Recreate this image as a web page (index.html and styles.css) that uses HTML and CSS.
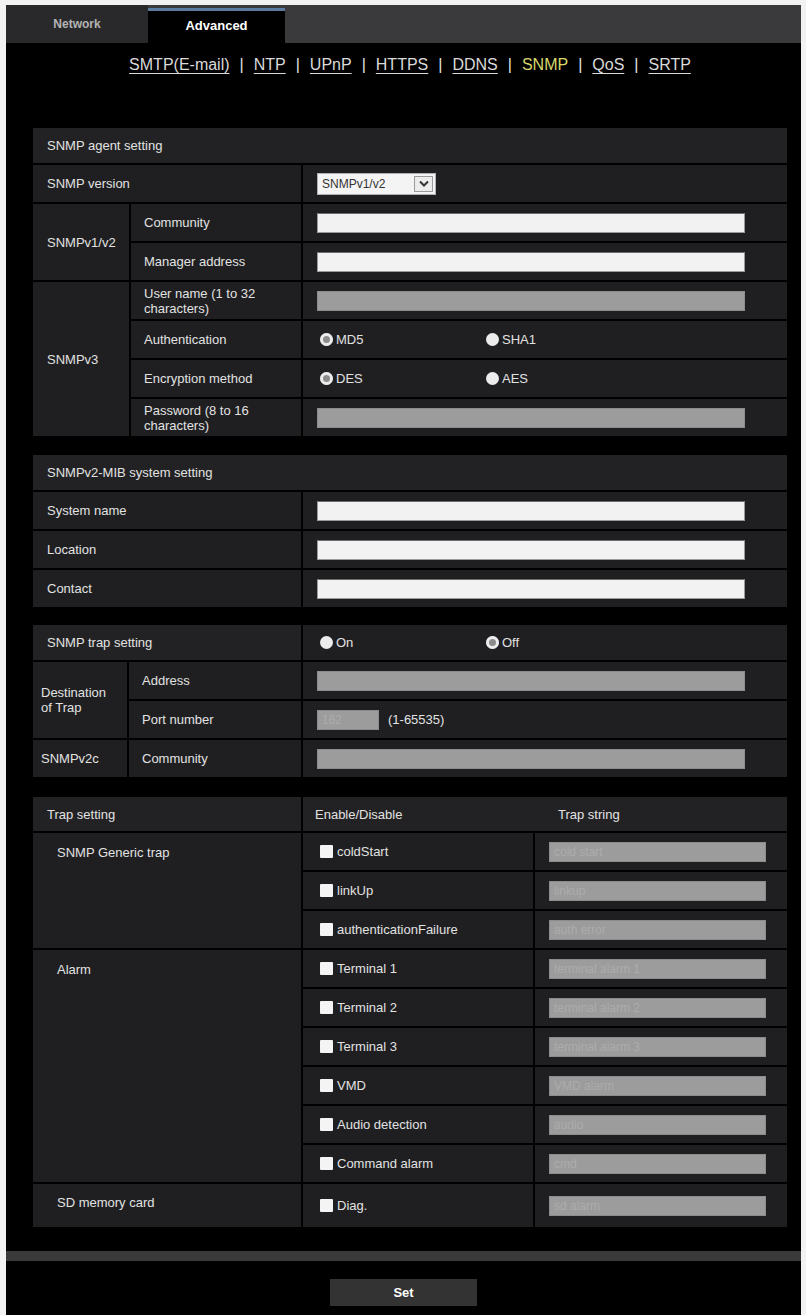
FILE: index.html
```html
<!DOCTYPE html>
<html lang="en">
<head>
    <meta charset="UTF-8">
    <meta name="viewport" content="width=device-width, initial-scale=1.0">
    <title>SNMP - Advanced</title>
    <link rel="stylesheet" href="styles.css">
</head>
<body>
<div class="page">
    <div class="tabs">
        <a class="tab" href="#">Network</a>
        <a class="tab tab-active" href="#">Advanced</a>
    </div>

    <div class="content">
        <nav class="subnav">
            <a href="#">SMTP(E-mail)</a><span class="sep">|</span>
            <a href="#">NTP</a><span class="sep">|</span>
            <a href="#">UPnP</a><span class="sep">|</span>
            <a href="#">HTTPS</a><span class="sep">|</span>
            <a href="#">DDNS</a><span class="sep">|</span>
            <span class="current">SNMP</span><span class="sep">|</span>
            <a href="#">QoS</a><span class="sep">|</span>
            <a href="#">SRTP</a>
        </nav>

        <!-- SNMP agent setting -->
        <section class="panel panel-agent">
            <div class="cell cell-head span-all">SNMP agent setting</div>

            <div class="cell span-2">SNMP version</div>
            <div class="cell cell-value">
                <div class="select">
                    <select>
                        <option>SNMPv1/v2</option>
                        <option>SNMPv3</option>
                    </select>
                    <span class="select-arrow">
                        <svg width="10" height="7" viewBox="0 0 10 7"><path d="M1 1.5 L5 5.5 L9 1.5" fill="none" stroke="#333" stroke-width="2"/></svg>
                    </span>
                </div>
            </div>

            <div class="cell rows-2">SNMPv1/v2</div>
            <div class="cell cell-sub">Community</div>
            <div class="cell cell-value"><input class="field" type="text"></div>
            <div class="cell cell-sub">Manager address</div>
            <div class="cell cell-value"><input class="field" type="text"></div>

            <div class="cell rows-4">SNMPv3</div>
            <div class="cell cell-sub">User name (1 to 32 characters)</div>
            <div class="cell cell-value"><input class="field" type="text" disabled></div>
            <div class="cell cell-sub">Authentication</div>
            <div class="cell cell-value">
                <label class="option"><input type="radio" name="auth" checked>MD5</label>
                <label class="option"><input type="radio" name="auth">SHA1</label>
            </div>
            <div class="cell cell-sub">Encryption method</div>
            <div class="cell cell-value">
                <label class="option"><input type="radio" name="enc" checked>DES</label>
                <label class="option"><input type="radio" name="enc">AES</label>
            </div>
            <div class="cell cell-sub">Password (8 to 16 characters)</div>
            <div class="cell cell-value"><input class="field" type="password" disabled></div>
        </section>

        <!-- SNMPv2-MIB system setting -->
        <section class="panel panel-mib">
            <div class="cell cell-head span-all">SNMPv2-MIB system setting</div>
            <div class="cell">System name</div>
            <div class="cell cell-value"><input class="field" type="text"></div>
            <div class="cell">Location</div>
            <div class="cell cell-value"><input class="field" type="text"></div>
            <div class="cell">Contact</div>
            <div class="cell cell-value"><input class="field" type="text"></div>
        </section>

        <!-- SNMP trap setting -->
        <section class="panel panel-trap">
            <div class="cell cell-head span-2">SNMP trap setting</div>
            <div class="cell cell-value">
                <label class="option"><input type="radio" name="trap">On</label>
                <label class="option"><input type="radio" name="trap" checked>Off</label>
            </div>

            <div class="cell cell-narrow rows-2">Destination of Trap</div>
            <div class="cell cell-sub">Address</div>
            <div class="cell cell-value"><input class="field" type="text" disabled></div>
            <div class="cell cell-sub">Port number</div>
            <div class="cell cell-value">
                <input class="field field-port" type="text" value="162" disabled>
                <span class="range">(1-65535)</span>
            </div>

            <div class="cell cell-narrow">SNMPv2c</div>
            <div class="cell cell-sub">Community</div>
            <div class="cell cell-value"><input class="field" type="text" disabled></div>
        </section>

        <!-- Trap setting -->
        <section class="panel panel-list">
            <div class="cell cell-head">Trap setting</div>
            <div class="cell cell-head span-2 head-split">
                <span class="head-enable">Enable/Disable</span>
                <span>Trap string</span>
            </div>

            <div class="cell cell-group rows-3">SNMP Generic trap</div>
            <div class="cell cell-check"><label class="check"><input type="checkbox">coldStart</label></div>
            <div class="cell cell-string"><input class="field field-string" type="text" value="cold start" disabled></div>
            <div class="cell cell-check"><label class="check"><input type="checkbox">linkUp</label></div>
            <div class="cell cell-string"><input class="field field-string" type="text" value="linkup" disabled></div>
            <div class="cell cell-check"><label class="check"><input type="checkbox">authenticationFailure</label></div>
            <div class="cell cell-string"><input class="field field-string" type="text" value="auth error" disabled></div>

            <div class="cell cell-group rows-6">Alarm</div>
            <div class="cell cell-check"><label class="check"><input type="checkbox">Terminal 1</label></div>
            <div class="cell cell-string"><input class="field field-string" type="text" value="terminal alarm 1" disabled></div>
            <div class="cell cell-check"><label class="check"><input type="checkbox">Terminal 2</label></div>
            <div class="cell cell-string"><input class="field field-string" type="text" value="terminal alarm 2" disabled></div>
            <div class="cell cell-check"><label class="check"><input type="checkbox">Terminal 3</label></div>
            <div class="cell cell-string"><input class="field field-string" type="text" value="terminal alarm 3" disabled></div>
            <div class="cell cell-check"><label class="check"><input type="checkbox">VMD</label></div>
            <div class="cell cell-string"><input class="field field-string" type="text" value="VMD alarm" disabled></div>
            <div class="cell cell-check"><label class="check"><input type="checkbox">Audio detection</label></div>
            <div class="cell cell-string"><input class="field field-string" type="text" value="audio" disabled></div>
            <div class="cell cell-check"><label class="check"><input type="checkbox">Command alarm</label></div>
            <div class="cell cell-string"><input class="field field-string" type="text" value="cmd" disabled></div>

            <div class="cell cell-group row-last">SD memory card</div>
            <div class="cell cell-check row-last"><label class="check"><input type="checkbox">Diag.</label></div>
            <div class="cell cell-string row-last"><input class="field field-string" type="text" value="sd alarm" disabled></div>
        </section>
    </div>

    <div class="footer-bar"></div>
    <div class="actions">
        <button class="btn-set" type="button">Set</button>
    </div>
</div>
</body>
</html>
```

FILE: styles.css
```css
* {
    margin: 0;
    padding: 0;
    box-sizing: border-box;
    font-family: 'Liberation Sans', Arial, sans-serif;
}

body {
    background: #f2f2f2;
}

.page {
    margin: 5px 5px 0 6px;
    min-height: 1310px;
    background: #000;
    color: #e2e2e2;
    font-size: 13px;
}

/* top tabs */
.tabs {
    display: flex;
    align-items: flex-end;
    height: 38px;
    background: #3a3a3c;
}

.tab {
    display: flex;
    align-items: center;
    justify-content: center;
    width: 142px;
    height: 38px;
    background: #29292b;
    color: #b4b4b4;
    font-size: 12px;
    font-weight: bold;
    text-decoration: none;
}

.tab-active {
    width: 137px;
    height: 35px;
    padding-bottom: 3px;
    background: #000;
    color: #fff;
    font-size: 13px;
    border-top: 3px solid #5a7aa0;
}

.content {
    padding: 12px 14px 0 27px;
}

/* sub menu */
.subnav {
    display: flex;
    justify-content: center;
    height: 20px;
    line-height: 20px;
    margin-bottom: 53px;
    font-size: 16px;
}

.subnav a {
    color: #dadada;
    text-decoration: underline;
    text-underline-offset: 3px;
}

.subnav .current {
    color: #d8d86a;
}

.subnav .sep {
    padding: 0 10px;
    color: #e0e0e0;
}

/* setting panels */
.panel {
    display: grid;
    grid-template-columns: 96px 170px 1fr;
    grid-auto-rows: 37px;
    gap: 2px;
    margin-bottom: 19px;
}

.panel-agent {
    grid-template-rows: 35px;
}

.panel-mib {
    grid-template-columns: 268px 1fr;
    grid-template-rows: 35px;
    margin-bottom: 18px;
}

.panel-trap {
    grid-template-columns: 94px 172px 1fr;
    grid-template-rows: 35px;
    margin-bottom: 20px;
}

.panel-list {
    grid-template-columns: 268px 230px 1fr;
    grid-template-rows: 34px;
    margin-bottom: 0;
}

.cell {
    display: flex;
    align-items: center;
    padding: 0 14px;
    background: #1f1f21;
    line-height: 15px;
}

.cell-head {
    background: #222224;
}

.span-all { grid-column: 1 / -1; }
.span-2 { grid-column: span 2; }
.rows-2 { grid-row: span 2; }
.rows-3 { grid-row: span 3; }
.rows-4 { grid-row: span 4; }
.rows-6 { grid-row: span 6; }

.cell-sub {
    padding: 0 24px 0 13px;
}

.cell-narrow {
    padding: 0 8px;
}

.cell-value {
    padding-left: 14px;
}

.cell-group {
    align-items: flex-start;
    padding: 12px 24px;
}

.row-last {
    height: 43px;
}

.panel-list .row-last.cell-group {
    padding-top: 11px;
}

.head-split {
    padding-left: 12px;
}

.head-enable {
    width: 243px;
}

.cell-check {
    padding-left: 17px;
}

/* form controls */
.field {
    width: 428px;
    height: 20px;
    padding: 0 4px;
    background: #f2f2f2;
    border: 1px solid #9a9a9a;
    border-top-color: #6c6c6c;
    font-size: 12px;
    color: #222;
}

.field:disabled {
    background: #9c9c9c;
    border-color: #8c8c8c;
    color: #acacac;
}

.field-port {
    width: 62px;
}

.field-string {
    width: 217px;
}

.range {
    margin-left: 9px;
}

.select {
    display: flex;
    align-items: center;
    width: 119px;
    height: 22px;
    padding: 2px;
    background: #f4f4f4;
    border: 1px solid #b0b0b0;
}

.select select {
    flex: 1;
    min-width: 0;
    height: 100%;
    padding-left: 2px;
    border: none;
    background: transparent;
    appearance: none;
    font-size: 12px;
    color: #333;
}

.select-arrow {
    display: flex;
    align-items: center;
    justify-content: center;
    width: 19px;
    height: 16px;
    border: 1px solid #9a9a9a;
    background: #ececec;
}

.option {
    display: inline-flex;
    align-items: center;
    width: 166px;
    gap: 3px;
}

.option input {
    appearance: none;
    width: 13px;
    height: 13px;
    margin-left: 3px;
    border-radius: 50%;
    background: #ececec;
}

.option input:checked {
    background: #8c8c8c;
    box-shadow: inset 0 0 0 3px #ececec;
}

.check {
    display: inline-flex;
    align-items: center;
    gap: 4px;
}

.check input {
    appearance: none;
    width: 13px;
    height: 13px;
    background: #f4f4f4;
    border-radius: 1px;
}

/* bottom */
.footer-bar {
    height: 10px;
    margin-top: 30px;
    background: #3a3a3a;
}

.actions {
    display: flex;
    justify-content: center;
    padding-top: 18px;
}

.btn-set {
    width: 147px;
    height: 27px;
    background: #333;
    color: #fff;
    border: none;
    font-size: 13px;
    font-weight: bold;
}
```
